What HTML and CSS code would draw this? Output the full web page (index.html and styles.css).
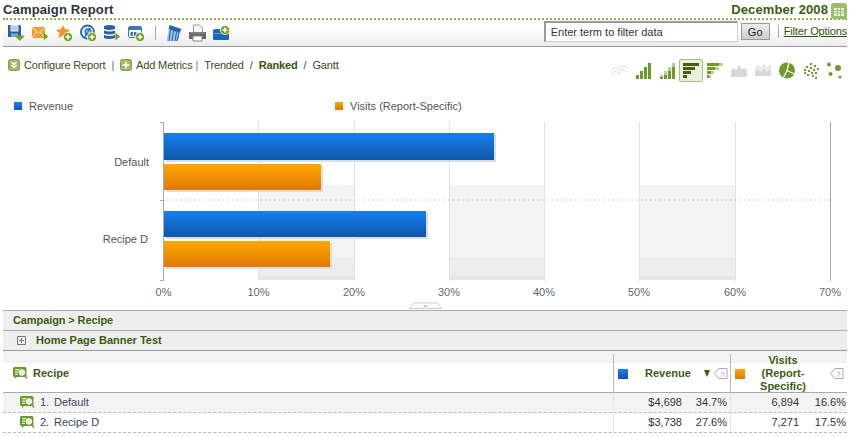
FILE: index.html
```html
<!DOCTYPE html>
<html lang="en">
<head>
    <meta charset="UTF-8">
    <title>Campaign Report</title>
    <link rel="stylesheet" href="styles.css">
</head>
<body>
<svg class="defs" width="0" height="0">
    <symbol id="plus" viewBox="0 0 10 10">
        <circle cx="5" cy="5" r="4.600" fill="#6fa31f" stroke="#fff" stroke-width=".8"/>
        <path d="M5 2.400v5.200M2.400 5h5.200" stroke="#fff" stroke-width="1.500"/>
    </symbol>
    <symbol id="arrow" viewBox="0 0 8 10">
        <path d="M1 0l6 5-6 5z" fill="#6fa31f"/>
    </symbol>
    <symbol id="seg" viewBox="0 0 15 13">
        <path d="M1.500 0h10.500q1.500 0 1.500 1.500v7q0 1.500-1.500 1.500h-8l-2 2v-2h-.500q-1.500 0-1.500-1.500v-7q0-1.500 1.500-1.500z" fill="#6a9a2c"/>
        <path d="M2 2.800h4.500M2 5h3.500M2 7.200h3" stroke="#fff" stroke-width="1.100"/>
        <circle cx="9" cy="5.500" r="2.800" fill="#e8f1da" stroke="#fff"/>
        <path d="M11 7.800l3 3.700" stroke="#7d9a5a" stroke-width="1.700"/>
    </symbol>
</svg>

<div class="page">
    <header class="title-row">
        <h1 class="title">Campaign Report</h1>
        <div class="date">December 2008
            <svg class="cal" viewBox="0 0 16 16">
                <rect width="16" height="16" rx="3" fill="#9dbb6b"/>
                <rect x="3" y="5" width="10" height="8" fill="#eef4e2"/>
                <path d="M3 7.500h10M3 10h10M6.300 5v8M9.700 5v8" stroke="#9dbb6b"/>
            </svg>
        </div>
    </header>

    <div class="toolbar">
        <div class="tools">
            <svg class="tool" viewBox="0 0 17 18">
                <path d="M0 1h12l1 1v11h-13z" fill="#2a5fa5"/><path d="M2.500 1h8v6.500h-8z" fill="#dce8f5"/><path d="M3.500 3h6M3.500 5h6" stroke="#8fb0d8"/>
                <path d="M3 9.500h7v3.500h-7z" fill="#7fa5d3"/>
                <path d="M6.500 11.500h10.500l-5.200 5.500z" fill="#6fa31f"/>
            </svg>
            <svg class="tool" viewBox="0 0 17 18">
                <rect x="0" y="3" width="13" height="11" fill="#ee9d2e"/><path d="M0 3.500l6.500 5.500 6.500-5.500M0 14l4.800-6.500M13 14l-4.800-6.500" fill="none" stroke="#ffe8c0"/>
                <use href="#arrow" x="11" y="7.500" width="6" height="10"/>
            </svg>
            <svg class="tool" viewBox="0 0 17 18">
                <path d="M7 1l2.200 4.300 4.800.6-3.500 3.300 1 4.800-4.500-2.400-4.500 2.400 1-4.800L-.000 5.900l4.800-.6z" fill="#ee9420"/>
                <use href="#plus" x="7" y="8" width="10" height="10"/>
            </svg>
            <svg class="tool" viewBox="0 0 17 18">
                <circle cx="7.500" cy="8" r="6.500" fill="#fff" stroke="#2a6cb4" stroke-width="2"/>
                <circle cx="8" cy="8" r="3" fill="#a8c8ea" stroke="#2a6cb4" stroke-width="1.300"/>
                <path d="M5 13l5-9" stroke="#2a6cb4" stroke-width="1.500"/>
                <use href="#plus" x="7" y="8" width="10" height="10"/>
            </svg>
            <svg class="tool" viewBox="0 0 17 18">
                <path d="M0 2q5.500-2 11 0v3q-5.500 2-11 0zM0 6.500q5.500 2 11 0v3q-5.500 2-11 0zM0 11q5.500 2 11 0v3q-5.500 2-11 0z" fill="#2a62a8"/>
                <use href="#arrow" x="10.500" y="7" width="6.500" height="11"/>
            </svg>
            <svg class="tool" viewBox="0 0 17 18">
                <rect x=".500" y="2.500" width="13" height="11" rx="1.500" fill="#fff" stroke="#3a76b8"/><path d="M1 3h12v3h-12z" fill="#3a76b8"/>
                <path d="M2.500 8h2.500v4h-2.500zM6 8h2.500v4h-2.500z" fill="#3a76b8"/>
                <use href="#plus" x="7" y="8" width="10" height="10"/>
            </svg>
            <span class="tool-sep"></span>
            <svg class="tool" viewBox="0 0 16 18">
                <path d="M4 2l11 4-3 11h-11z" fill="#a8c6e6"/><path d="M4 1l12 4-2 4-11-4z" fill="#2a62a8"/>
                <path d="M5 6l-1.500 11M8 7l-1.500 10M11 8l-1.500 9M13.500 9l-2 8" stroke="#2a6cb4" stroke-width="1.200"/>
            </svg>
            <svg class="tool" viewBox="0 0 17 18">
                <path d="M4.500 1h6l3 3v5h-9z" fill="#f6f6f6" stroke="#999"/><path d="M0 8h17v7h-17z" fill="#666"/><path d="M1 9h15" stroke="#999"/>
                <path d="M4 12h9v5h-9z" fill="#fff" stroke="#888"/>
            </svg>
            <svg class="tool" viewBox="0 0 17 18">
                <path d="M0 7q0-2 2-2h12q2 0 2 2v8q0 1-1 1h-14q-1 0-1-1z" fill="#1e68b8"/><path d="M0 9.500h16" stroke="#5c9ad8"/>
                <use href="#plus" x="7" y="1" width="10" height="10"/>
            </svg>
        </div>
        <div class="filter">
            <input class="filter-input" type="text" value="Enter term to filter data">
            <button class="go" type="button">Go</button>
            <a class="filter-link" href="#">Filter Options</a>
        </div>
    </div>

    <div class="controls">
        <div class="links">
            <svg class="ctl-icon" viewBox="0 0 12 12"><rect x=".500" y=".500" width="11" height="11" rx="2" fill="#9dbb6b" stroke="#7f9f4e"/><path d="M3.500 3l2.500 2.500 2.500-2.500M3.500 6l2.500 2.500 2.500-2.500" fill="none" stroke="#fff" stroke-width="1.300"/></svg>
            <span>Configure Report</span>
            <span class="bar-a">|</span>
            <svg class="ctl-icon" viewBox="0 0 12 12"><rect x=".500" y=".500" width="11" height="11" rx="2" fill="#9dbb6b" stroke="#7f9f4e"/><path d="M6 2.500v7M2.500 6h7" stroke="#fff" stroke-width="1.500"/></svg>
            <span>Add Metrics</span>
            <span class="bar-b">|</span>
            <span>Trended</span><span class="slash">/</span><b class="on">Ranked</b><span class="slash">/</span><span>Gantt</span>
        </div>
        <div class="chart-types">
            <svg class="ct" width="17" viewBox="0 0 17 17"><path d="M0 9l4-4 4 3 4-5 5 4M0 14l4-5 4 3 4-5 5 4" fill="none" stroke="#ddd" stroke-width="1.200" stroke-dasharray="2 1"/></svg>
            <svg class="ct gap" width="15" viewBox="0 0 15 17"><path d="M0 13h3v4h-3zM4 9h3v8h-3zM8 5h3v12h-3zM12 1h3v16h-3z" fill="#6f9a2b"/></svg>
            <svg class="ct" width="15" viewBox="0 0 15 17"><path d="M0 15h3v2h-3zM4 13h3v4h-3zM8 9h3v8h-3zM12 5h3v12h-3z" fill="#6f9a2b"/><path d="M0 13h3v2h-3zM4 9h3v4h-3zM8 5h3v4h-3zM12 1h3v4h-3z" fill="#b8cf94"/></svg>
            <span class="ct-on"><svg width="16" height="15" viewBox="0 0 16 15"><path d="M0 0h16v3h-16zM0 4h12v3h-12zM0 8h8v3h-8zM0 12h4v3h-4z" fill="#3f6110"/></svg></span>
            <svg class="ct" width="16" viewBox="0 0 16 17"><path d="M0 1h12v3h-12zM0 5h8v3h-8zM0 9h4v3h-4zM0 13h2v3h-2z" fill="#6f9a2b"/><path d="M12 1h4v3h-4zM8 5h4v3h-4zM4 9h3v3h-3zM2 13h2v3h-2z" fill="#b8cf94"/></svg>
            <svg class="ct" width="16" viewBox="0 0 16 17"><path d="M0 8l3-2 2 2 3-5 3 4 2-1 3 2v7h-16z" fill="#d8d8d8"/></svg>
            <svg class="ct" width="16" viewBox="0 0 16 17"><path d="M0 5l3-3 3 3 3-4 3 4 4-3v12h-16z" fill="#ebebeb"/><path d="M0 9l3-2 3 3 3-4 3 4 4-3v7h-16z" fill="#d8d8d8"/></svg>
            <svg class="ct" width="16" viewBox="0 0 16 17"><circle cx="8" cy="8.500" r="8" fill="#6f9a2b"/><path d="M8 8.500l2-8M8 8.500l7.500 3.500M8 8.500l-3.500 7" stroke="#fff" stroke-width="1.300"/></svg>
            <svg class="ct" width="16" viewBox="0 0 16 17"><path d="M7 1h2v2h-2zM11 3h2v2h-2zM3 4h2v2h-2zM7 5h2v2h-2zM1 7h2v2h-2zM5 8h2v2h-2zM10 7h2v2h-2zM14 6h2v2h-2zM1 10h2v2h-2zM8 10h2v2h-2zM12 10h2v2h-2zM4 12h2v2h-2zM9 13h2v2h-2zM12 15h2v2h-2z" fill="#6f9a2b"/></svg>
            <svg class="ct" width="15" viewBox="0 0 15 17"><circle cx="2" cy="2.500" r="2" fill="#6f9a2b"/><circle cx="11" cy="6" r="3" fill="#6f9a2b"/><circle cx="3.500" cy="12" r="2" fill="#6f9a2b"/><circle cx="13" cy="15" r="1.500" fill="#6f9a2b"/></svg>
        </div>
    </div>

    <div class="legend">
        <div class="legend-item"><span class="swatch blue"></span>Revenue</div>
        <div class="legend-item"><span class="swatch orange"></span>Visits (Report-Specific)</div>
    </div>

    <svg class="chart" width="852" height="176" viewBox="0 122 852 176">
        <defs>
            <linearGradient id="gb" x1="0" y1="0" x2="0" y2="1"><stop offset="0" stop-color="#1680f0"/><stop offset="1" stop-color="#0f56a8"/></linearGradient>
            <linearGradient id="go" x1="0" y1="0" x2="0" y2="1"><stop offset="0" stop-color="#ffa800"/><stop offset="1" stop-color="#de7804"/></linearGradient>
        </defs>
        <g class="blocks">
            <path d="M258 185h96v72h-96zM449 185h95v72h-95zM639 185h96v72h-96z" fill="#f3f3f3"/>
            <path d="M258 257h96v19h-96zM449 257h95v19h-95zM639 257h96v19h-96z" fill="#ededed"/>
            <path d="M258 276h96v4h-96zM449 276h95v4h-95zM639 276h96v4h-96z" fill="#e6e6e6"/>
        </g>
        <path d="M258.500 122v159M354.500 122v159M449.500 122v159M544.500 122v159M639.500 122v159M735.500 122v159" stroke="#e2e2e2"/>
        <path d="M830.500 122v159M163.500 122v159M160 122.500h4M160 200.500h4M160 280.500h4" stroke="#aaa"/>
        <path d="M166 200h664" stroke="#c4c4c4" stroke-dasharray="1.500 3.200"/>
        <path d="M166 135h330v27h-330zM166 166h157v26h-157zM166 213h262v26h-262zM166 243h166v26h-166z" fill="#ddd"/>
        <rect x="164" y="133" width="330" height="27" fill="url(#gb)"/>
        <rect x="164" y="164" width="157" height="26" fill="url(#go)"/>
        <rect x="164" y="211" width="262" height="26" fill="url(#gb)"/>
        <rect x="164" y="241" width="166" height="26" fill="url(#go)"/>
        <g class="cat">
            <text x="149" y="166">Default</text>
            <text x="148" y="243">Recipe D</text>
        </g>
        <g class="tick">
            <text x="163.500" y="296">0%</text>
            <text x="258.500" y="296">10%</text>
            <text x="354" y="296">20%</text>
            <text x="449" y="296">30%</text>
            <text x="544" y="296">40%</text>
            <text x="639" y="296">50%</text>
            <text x="735" y="296">60%</text>
            <text x="830" y="296">70%</text>
        </g>
    </svg>

    <div class="handle-row">
        <svg width="33" height="7" viewBox="0 0 33 7"><path d="M.500 6.500l4-5.500h24l4 5.500z" fill="#fff" stroke="#ccc"/><path d="M14 5l2.500-2.500 2.500 2.500z" fill="#bbb"/></svg>
    </div>

    <div class="crumb">Campaign &gt; Recipe</div>
    <div class="group-row">
        <svg class="expand" viewBox="0 0 9 9"><path d="M.500.500h8v8h-8zM4.500 2v5M2 4.500h5" fill="none" stroke="#777"/></svg>
        Home Page Banner Test
    </div>

    <div class="grid head">
        <div class="h-name"><svg class="seg" viewBox="0 0 15 13"><use href="#seg"/></svg>Recipe</div>
        <div class="h-metric">
            <span class="swatch-big blue"></span>
            <span class="h-label rev">Revenue</span>
            <span class="sort"></span>
            <svg class="tag" viewBox="0 0 14 11"><path d="M4.500 .5h8.500v10h-8.500l-4-5z" fill="#fff" stroke="#aaa"/><text x="8.500" y="8.500" text-anchor="middle" class="tag-q">?</text></svg>
        </div>
        <div class="h-metric">
            <span class="swatch-big orange"></span>
            <span class="h-label vis">Visits (Report-Specific)</span>
            <svg class="tag" viewBox="0 0 14 11"><path d="M4.500 .5h8.500v10h-8.500l-4-5z" fill="#fff" stroke="#aaa"/><text x="8.500" y="8.500" text-anchor="middle" class="tag-q">?</text></svg>
        </div>
    </div>
    <div class="grid row shaded">
        <div class="name"><svg class="seg" viewBox="0 0 15 13"><use href="#seg"/></svg><span class="num">1.</span>Default</div>
        <div class="val start">$4,698</div><div class="pct">34.7%</div>
        <div class="val start">6,894</div><div class="pct last">16.6%</div>
    </div>
    <div class="grid row">
        <div class="name"><svg class="seg" viewBox="0 0 15 13"><use href="#seg"/></svg><span class="num">2.</span>Recipe D</div>
        <div class="val start">$3,738</div><div class="pct">27.6%</div>
        <div class="val start">7,271</div><div class="pct last">17.5%</div>
    </div>
</div>
</body>
</html>
```
FILE: styles.css
```css
html, body {
    margin: 0;
    background: #fff;
    overflow: hidden;
}
body {
    font: 11px "Liberation Sans", Arial, sans-serif;
    color: #3c4a26;
}
.defs {
    position: absolute;
}
.tag-q {
    font: 8px "Liberation Sans", Arial, sans-serif;
    fill: #999;
}
.page {
    width: 844px;
    margin-left: 3px;
}

/* title */
.title-row {
    display: flex;
    justify-content: space-between;
    height: 18px;
    border-bottom: 2px dotted #8cb04a;
}
.title {
    margin: 2px 0 0;
    font-size: 13px;
    line-height: 16px;
    letter-spacing: .15px;
    color: #2b3440;
}
.date {
    display: flex;
    gap: 3px;
    margin-top: 2px;
    font-size: 13px;
    line-height: 16px;
    letter-spacing: .1px;
    font-weight: bold;
    color: #3c5c12;
}
.cal {
    width: 16px;
    height: 16px;
    margin-top: 1px;
}

/* toolbar */
.toolbar {
    display: flex;
    justify-content: space-between;
    height: 26px;
    background: linear-gradient(#fff 30%, #ececec);
    border-bottom: 1px solid #999;
}
.tools {
    display: flex;
    align-items: center;
    gap: 7px;
    padding-left: 5px;
}
.tool {
    width: 17px;
    height: 18px;
}
.tool-sep {
    width: 1px;
    height: 14px;
    margin: 0 2px 0 3px;
    background: #aaa;
}
.filter {
    display: flex;
    align-items: center;
    padding-bottom: 3px;
}
.filter-input {
    box-sizing: border-box;
    width: 194px;
    height: 21px;
    margin: 0;
    padding: 0 5px;
    border: 1px solid #888;
    border-top-width: 2px;
    border-left-width: 2px;
    border-color: #999 #ccc #ccc #999;
    font: 11px "Liberation Sans", Arial, sans-serif;
    color: #333;
    background: #fff;
}
.go {
    width: 29px;
    height: 17px;
    margin: 0 8px 0 3px;
    padding: 0;
    border: 1px solid #999;
    background: linear-gradient(#eee, #ccc);
    font: 11px "Liberation Sans", Arial, sans-serif;
    color: #222;
}
.filter-link {
    padding-left: 5px;
    border-left: 1px solid #aaa;
    line-height: 13px;
    letter-spacing: -.15px;
    color: #33550f;
}

/* configure links and chart types */
.controls {
    display: flex;
    justify-content: space-between;
    height: 50px;
}
.links {
    display: flex;
    align-items: center;
    height: 36px;
    padding-left: 5px;
    white-space: nowrap;
    letter-spacing: -.15px;
}
.ctl-icon {
    width: 12px;
    height: 12px;
    margin-right: 4px;
}
.bar-a {
    margin: 0 6px;
    color: #6666aa;
}
.bar-b {
    margin: 0 6px 0 3px;
    color: #aa6666;
}
.slash {
    margin: 0 6px;
}
.on {
    color: #33550f;
}
.chart-types {
    display: flex;
    align-items: flex-start;
    gap: 8px;
    padding: 15px 5px 0 0;
}
.ct {
    height: 17px;
}
.gap {
    margin-right: 1px;
}
.ct-on {
    display: flex;
    align-items: center;
    justify-content: center;
    box-sizing: border-box;
    width: 24px;
    height: 23px;
    margin: -3px -4px 0;
    background: #eaf0df;
    border: 1px solid #a9bf83;
    border-radius: 2px;
}

/* legend */
.legend {
    display: flex;
    height: 25px;
    padding-left: 11px;
}
.legend-item {
    display: flex;
    align-items: center;
    width: 321px;
    height: 17px;
    color: #555;
}
.swatch {
    width: 8px;
    height: 8px;
    margin-right: 7px;
}
.blue {
    background: linear-gradient(#1680f0, #0f56a8);
}
.orange {
    background: linear-gradient(#ffa800, #de7804);
}

/* chart */
.chart {
    display: block;
    margin-left: -3px;
}
.cat text {
    font: 11px "Liberation Sans", Arial, sans-serif;
    fill: #555;
    text-anchor: end;
}
.tick text {
    font: 11px "Liberation Sans", Arial, sans-serif;
    fill: #666;
    text-anchor: middle;
}
.handle-row {
    display: flex;
    height: 12px;
    padding: 4px 0 0 406px;
    box-sizing: border-box;
}

/* table */
.crumb, .group-row {
    box-sizing: border-box;
    height: 20px;
    padding-left: 10px;
    background: #eee;
    border-top: 1px solid #aaa;
    font-weight: bold;
    line-height: 19px;
    color: #3c5c12;
}
.crumb {
    letter-spacing: -.1px;
}
.group-row {
    display: flex;
    align-items: center;
    gap: 10px;
    padding-left: 14px;
}
.expand {
    width: 9px;
    height: 9px;
}
.grid {
    display: grid;
    grid-template-columns: 610px 69px 48px 69px 48px;
}
.head {
    height: 43px;
    border-top: 1px solid #999;
    border-bottom: 1px solid #aaa;
    box-sizing: border-box;
    background: linear-gradient(#f3f3f3 12px, #fff 12px);
    font-weight: bold;
    color: #3c5c12;
}
.h-name {
    display: flex;
    align-items: center;
    gap: 5px;
    padding: 0 0 1px 10px;
}
.seg {
    width: 15px;
    height: 13px;
}
.h-metric {
    grid-column: span 2;
    display: flex;
    align-items: center;
    margin: 3px 0;
    border-left: 1px solid #bbb;
}
.swatch-big {
    width: 10px;
    height: 10px;
    margin-left: 4px;
}
.h-label {
    text-align: center;
    line-height: 13px;
}
.rev {
    margin-left: 17px;
}
.vis {
    width: 60px;
    margin-left: 8px;
}
.sort {
    width: 0;
    height: 0;
    margin-left: 13px;
    border: 3px solid transparent;
    border-top: 7px solid #3c5c12;
    border-bottom: 0;
}
.tag {
    width: 14px;
    height: 11px;
    margin-left: 4px;
}
.vis + .tag {
    margin-left: 17px;
}
.row {
    box-sizing: border-box;
    height: 20px;
    border-bottom: 1px dashed #bbb;
    line-height: 19px;
    color: #333;
}
.shaded {
    background: #f3f3f3;
}
.name {
    display: flex;
    align-items: center;
    padding-left: 17px;
    color: #3a4560;
}
.name .seg {
    margin-right: 5px;
}
.num {
    width: 14px;
}
.val, .pct {
    text-align: right;
}
.start {
    border-left: 1px solid #e6e6e6;
}
.pct {
    padding-right: 3px;
}
.last {
    padding-right: 1px;
}
```
